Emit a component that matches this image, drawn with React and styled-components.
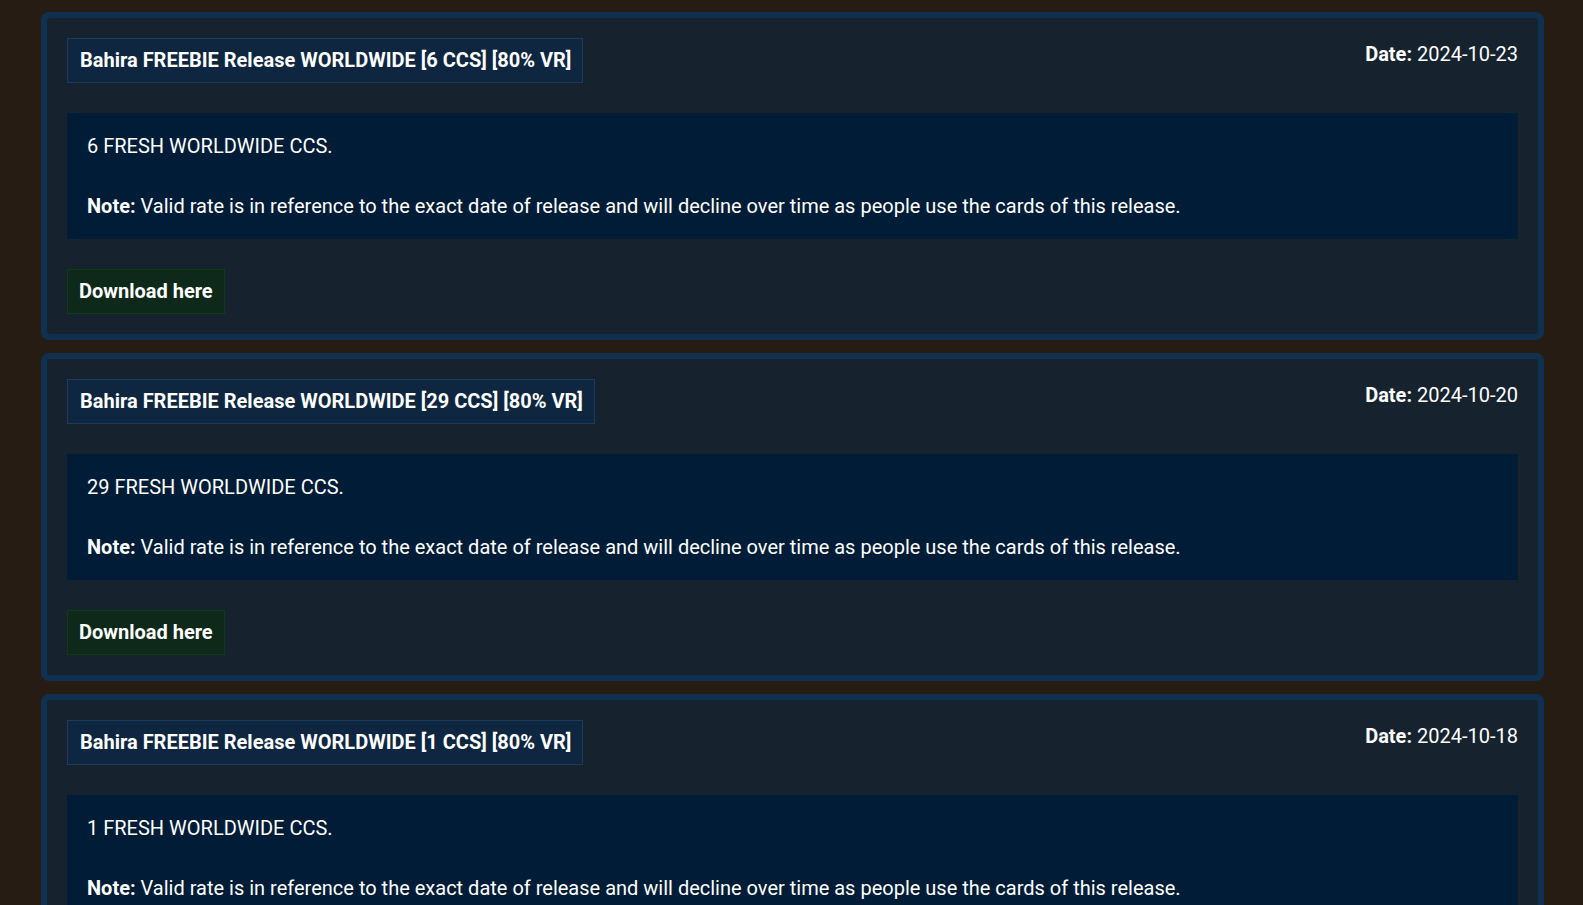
import React from 'react';
import styled, {createGlobalStyle} from 'styled-components';

const releases = [
    {count: 6, date: '2024-10-23'},
    {count: 29, date: '2024-10-20'},
    {count: 1, date: '2024-10-18'},
];

const App = () => {
    return (
        <Page>
            <GlobalStyle/>
            {
                releases.map((r, i) => {
                    return (
                        <Card key={i}>
                            <Header>
                                <Title>Bahira FREEBIE Release WORLDWIDE [{r.count} CCS] [80% VR]</Title>
                                <DateText><b>Date:</b> {r.date}</DateText>
                            </Header>
                            <Body>
                                {r.count} FRESH WORLDWIDE CCS.
                                <br/>
                                <br/>
                                <b>Note:</b> Valid rate is in reference to the exact date of release and will decline over time as people use the cards of this release.
                            </Body>
                            <div>
                                <DownloadButton href="#">Download here</DownloadButton>
                            </div>
                        </Card>
                    )
                })
            }
        </Page>
    )
};

export default App;

const GlobalStyle = createGlobalStyle`
    html, body {
        margin: 0;
        background: #271c13;
    }
    body {
        font-family: Roboto, "Liberation Sans", sans-serif;
        color: #ffffff;
    }
`;

const Page = styled.div`
    display: flex;
    flex-direction: column;
    gap: 13px;
    padding: 12px 39px 12px 41px;
    min-height: 100vh;
    box-sizing: border-box;
`;

const Card = styled.div`
    display: flex;
    flex-direction: column;
    gap: 30px;
    padding: 20px;
    background: #16232f;
    border: 6px solid #0f3050;
    border-radius: 8px;
`;

const Header = styled.div`
    display: flex;
    justify-content: space-between;
    align-items: flex-start;
`;

const Title = styled.div`
    padding: 8px 11px 8px 12px;
    background: #0e2640;
    border: 1px solid #1d3c5c;
    font-size: 20px;
    font-weight: 700;
    line-height: 27px;
`;

const DateText = styled.div`
    margin-top: 3px;
    font-size: 20px;
    line-height: 26px;
`;

const Body = styled.div`
    padding: 18px 20px;
    background: #001c36;
    font-size: 20px;
    line-height: 30px;
`;

const DownloadButton = styled.a`
    display: inline-block;
    padding: 8px 11px;
    background: #0e2819;
    border: 1px solid #0b3e18;
    color: #ffffff;
    font-size: 20px;
    font-weight: 700;
    line-height: 27px;
    text-decoration: none;

    :hover {
        cursor: pointer;
    }
`;
